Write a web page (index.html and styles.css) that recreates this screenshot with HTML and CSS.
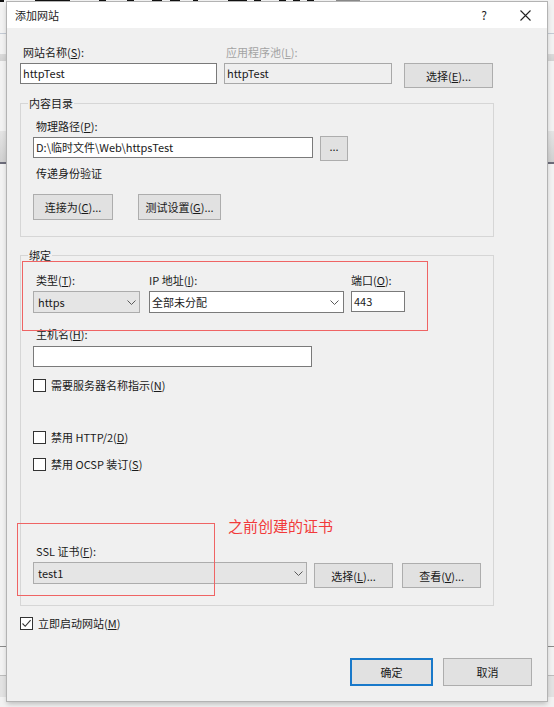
FILE: index.html
```html
<!DOCTYPE html>
<html lang="zh-CN">
<head>
<meta charset="utf-8">
<title>添加网站</title>
<link rel="stylesheet" href="styles.css">
</head>
<body>
<div class="topstrip"></div>
<div class="dialog">
  <header class="titlebar">
    <span class="title">添加网站</span>
    <span class="help">?</span>
    <span class="close"><svg width="11" height="11" viewBox="0 0 11 11"><path d="M0.5 0.5 L10.5 10.5 M10.5 0.5 L0.5 10.5" stroke="#222" stroke-width="1.1" fill="none"/></svg></span>
  </header>

  <main class="content">
    <div class="row site-row">
      <div class="field site-name">
        <div class="label">网站名称(<u>S</u>):</div>
        <div class="input">httpTest</div>
      </div>
      <div class="field pool">
        <div class="label disabled">应用程序池(<u>L</u>):</div>
        <div class="input readonly">httpTest</div>
      </div>
      <div class="btn pool-btn">选择(<u>E</u>)...</div>
    </div>

    <fieldset class="group group-content">
      <legend>内容目录</legend>
      <div class="label">物理路径(<u>P</u>):</div>
      <div class="row path-row">
        <div class="input path-input">D:\临时文件\Web\httpsTest</div>
        <div class="btn dots">...</div>
      </div>
      <div class="label pass-label">传递身份验证</div>
      <div class="row auth-row">
        <div class="btn connect-btn">连接为(<u>C</u>)...</div>
        <div class="btn test-btn">测试设置(<u>G</u>)...</div>
      </div>
    </fieldset>

    <fieldset class="group group-binding">
      <legend>绑定</legend>
      <div class="row binding-row">
        <div class="field col-type">
          <div class="label">类型(<u>T</u>):</div>
          <div class="select grey type-select"><span class="value">https</span><svg class="chev" width="9" height="5" viewBox="0 0 9 5"><path d="M0.5 0.5 L4.5 4.5 L8.5 0.5" stroke="#5a5a5a" stroke-width="1" fill="none"/></svg></div>
        </div>
        <div class="field col-ip">
          <div class="label flush">IP 地址(<u>I</u>):</div>
          <div class="select white ip-select"><span class="value">全部未分配</span><svg class="chev" width="9" height="5" viewBox="0 0 9 5"><path d="M0.5 0.5 L4.5 4.5 L8.5 0.5" stroke="#5a5a5a" stroke-width="1" fill="none"/></svg></div>
        </div>
        <div class="field col-port">
          <div class="label flush">端口(<u>O</u>):</div>
          <div class="input port-input">443</div>
        </div>
      </div>

      <div class="label host-label">主机名(<u>H</u>):</div>
      <div class="input host-input"></div>

      <div class="check sni"><span class="box"></span><span>需要服务器名称指示(<u>N</u>)</span></div>
      <div class="check http2"><span class="box"></span><span>禁用 HTTP/2(<u>D</u>)</span></div>
      <div class="check ocsp"><span class="box"></span><span>禁用 OCSP 装订(<u>S</u>)</span></div>

      <div class="label ssl-label">SSL 证书(<u>F</u>):</div>
      <div class="row ssl-row">
        <div class="select grey ssl-select"><span class="value">test1</span><svg class="chev" width="9" height="5" viewBox="0 0 9 5"><path d="M0.5 0.5 L4.5 4.5 L8.5 0.5" stroke="#5a5a5a" stroke-width="1" fill="none"/></svg></div>
        <div class="btn ssl-choose">选择(<u>L</u>)...</div>
        <div class="btn ssl-view">查看(<u>V</u>)...</div>
      </div>
    </fieldset>

    <div class="check start"><span class="box checked"><svg width="11" height="11" viewBox="0 0 11 11"><path d="M1.5 5.5 L4.2 8.3 L9.6 2.2" stroke="#333" stroke-width="1.1" fill="none"/></svg></span><span>立即启动网站(<u>M</u>)</span></div>

    <div class="footer">
      <div class="btn ok">确定</div>
      <div class="btn cancel">取消</div>
    </div>
  </main>

  <div class="mark mark-binding"></div>
  <div class="mark mark-ssl"></div>
  <div class="note">之前创建的证书</div>
</div>
</body>
</html>
```

FILE: styles.css
```css
* {
  box-sizing: border-box;
}

html,
body {
  margin: 0;
  height: 100%;
}

body {
  font-family: "Noto Sans CJK SC", "Noto Sans", sans-serif;
  font-size: 11px;
  color: #1a1a1a;
  overflow: hidden;
  background:
    linear-gradient(to bottom, transparent 33px, #c3cad4 33px, #c3cad4 34px, transparent 34px),
    linear-gradient(to bottom, transparent 54px, #dadada 54px, #d2d2d2 61px, transparent 61px),
    linear-gradient(to bottom, transparent 131px, #e4e4e4 131px, #d0d0d0 162px, #6c6c7a 162px, #6c6c7a 164px, transparent 164px),
    linear-gradient(to bottom, transparent 646px, #8a8a8a 646px, #8a8a8a 647px, transparent 647px),
    linear-gradient(to bottom, transparent 675px, #bcbcbc 675px, #bcbcbc 676px, #e2e2e2 676px, #e2e2e2 697px, transparent 697px),
    #f2f2f2;
}

.topstrip {
  height: 2px;
  background: linear-gradient(to right,
    #111 0 4px, transparent 4px 35px,
    #111 35px 70px, transparent 70px 99px,
    #111 99px 106px, transparent 106px 127px,
    #111 127px 134px, transparent 134px 152px,
    #111 152px 162px, transparent 162px 170px,
    #111 170px 180px, transparent 180px 193px,
    #111 193px 198px, transparent 198px 228px,
    #111 228px 247px, transparent 247px 254px,
    #111 254px 261px, transparent 261px 279px,
    #111 279px 286px, transparent 286px 293px,
    #111 293px 300px, transparent 300px 307px,
    #111 307px 314px, transparent 314px 336px,
    #8a8a8a 336px 360px, transparent 360px);
}

.dialog {
  position: relative;
  margin-left: 7px;
  width: 540px;
  background: #f0f0f0;
  box-shadow: 0 0 0 1px #b3b3b3, 0 3px 5px rgba(0, 0, 0, 0.22);
}

/* title bar */
.titlebar {
  height: 26px;
  background: #ffffff;
  display: flex;
  align-items: center;
  padding-left: 8px;
  padding-right: 12px;
}

.title {
  flex: 1;
  line-height: 16px;
  color: #1a1a1a;
}

.help {
  width: 16px;
  text-align: center;
  font-size: 12px;
  line-height: 16px;
  color: #222;
}

.close {
  width: 20px;
  margin-left: 23px;
  display: flex;
  justify-content: center;
  align-items: center;
}

.close svg {
  display: block;
}

/* content */
.content {
  padding: 16px 15px 15px 13px;
}

.row {
  display: flex;
  align-items: flex-start;
}

.label {
  line-height: 16px;
  padding-left: 3px;
  margin-bottom: 3px;
  white-space: nowrap;
}

.label.flush {
  padding-left: 0;
}

.label.disabled {
  color: #a3a3a3;
}

u {
  text-decoration: underline;
  text-underline-offset: 1px;
}

.input {
  height: 21px;
  border: 1px solid #7a7a7a;
  background: #ffffff;
  padding: 0 2px;
  line-height: 19px;
  white-space: nowrap;
  overflow: hidden;
}

.input.readonly {
  background: #efefef;
  border-color: #a8a8a8;
}

.btn {
  display: flex;
  align-items: center;
  justify-content: center;
  background: #e1e1e1;
  border: 1px solid #adadad;
  white-space: nowrap;
  line-height: 16px;
}

.select {
  height: 22px;
  display: flex;
  align-items: center;
  border: 1px solid #acacac;
  padding-right: 3px;
  white-space: nowrap;
}

.select .value {
  flex: 1;
}

.select.grey {
  background: #e5e5e5;
  padding-left: 4px;
}

.select.white {
  background: #ffffff;
  border-color: #7a7a7a;
  padding-left: 2px;
  padding-right: 4px;
}

.chev {
  display: block;
}

/* first row */
.site-name {
  width: 197px;
}

.pool {
  width: 168px;
  margin-left: 7px;
}

.pool .label {
  padding-left: 2px;
}

.pool-btn {
  width: 89px;
  height: 25px;
  margin-left: 12px;
  margin-top: 19px;
}

/* group boxes */
.group {
  margin: 0;
  border: 1px solid #d6d6d6;
  padding: 7px 12px 16px 12px;
  min-width: 0;
  width: 474px;
}

.group legend {
  padding: 0 1px;
  margin-left: -5px;
  line-height: 16px;
}

.group-content {
  margin-top: 7px;
}

.path-row {
  margin-top: -1px;
}

.path-input {
  width: 280px;
  margin-top: 1px;
}

.dots {
  width: 28px;
  height: 25px;
  margin-left: 7px;
  align-items: flex-end;
  padding-bottom: 6px;
}

.pass-label {
  margin-top: 4px;
  margin-bottom: 0;
}

.auth-row {
  margin-top: 13px;
}

.connect-btn {
  width: 80px;
  height: 26px;
}

.test-btn {
  width: 83px;
  height: 26px;
  margin-left: 25px;
}

.group-binding {
  margin-top: 10px;
  padding-top: 9px;
  padding-bottom: 17px;
}

.col-type {
  width: 107px;
}

.col-ip {
  width: 195px;
  margin-left: 9px;
}

.col-port {
  width: 54px;
  margin-left: 7px;
}

.port-input {
  height: 21px;
}

.host-label {
  margin-top: 13px;
  margin-bottom: 4px;
}

.host-input {
  width: 279px;
}

.check {
  display: flex;
  align-items: center;
  line-height: 16px;
  white-space: nowrap;
}

.check .box {
  width: 13px;
  height: 13px;
  border: 1px solid #333333;
  background: #ffffff;
  margin-right: 5px;
  flex: none;
  display: flex;
  align-items: center;
  justify-content: center;
}

.check .box svg {
  display: block;
}

.sni {
  margin-top: 10px;
}

.http2 {
  margin-top: 36px;
}

.ocsp {
  margin-top: 11px;
}

.ssl-label {
  margin-top: 71px;
}

.ssl-select {
  width: 275px;
  padding-left: 3px;
}

.ssl-choose {
  width: 80px;
  height: 25px;
  margin-left: 7px;
  margin-top: 1px;
}

.ssl-view {
  width: 79px;
  height: 25px;
  margin-left: 9px;
  margin-top: 1px;
}

.start {
  margin-top: 9px;
}

.footer {
  display: flex;
  justify-content: flex-end;
  margin-top: 27px;
}

.ok {
  width: 83px;
  height: 28px;
  border: 2px solid #1979ca;
}

.cancel {
  width: 89px;
  height: 28px;
  margin-left: 10px;
}

/* red annotations drawn over the dialog */
.mark {
  position: absolute;
  border: 1px solid #ef6464;
}

.mark-binding {
  left: 15px;
  top: 259px;
  width: 406px;
  height: 70px;
}

.mark-ssl {
  left: 10px;
  top: 521px;
  width: 198px;
  height: 73px;
}

.note {
  position: absolute;
  left: 221px;
  top: 514px;
  font-size: 15px;
  line-height: 20px;
  color: #f23a3a;
  white-space: nowrap;
}
```
